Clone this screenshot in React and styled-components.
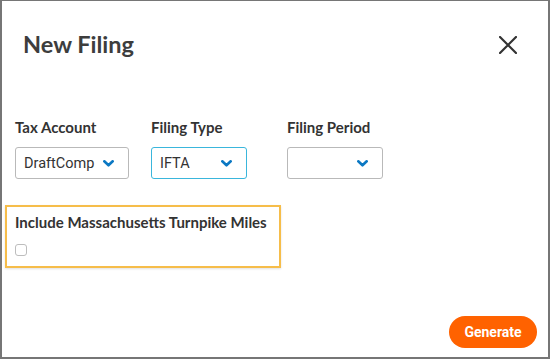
import styled, { createGlobalStyle } from "styled-components";

const GlobalStyle = createGlobalStyle`
  html, body { margin: 0; padding: 0; background: #fff; }
  body { font-family: Lato, "Open Sans", sans-serif; }
  * { box-sizing: border-box; }
`

function Chevron() {
    return (
        <svg width="11" height="7" viewBox="0 0 11 7">
            <path d="M1.3 1.3 L5.5 5.3 L9.7 1.3" fill="none" stroke="#0b78c3" strokeWidth="2.6" strokeLinecap="round" strokeLinejoin="round" />
        </svg>
    )
}

function Field({ label, value, width, focused }) {
    return (
        <Campo>
            <Rotulo>{label}</Rotulo>
            <Seletor width={width} focused={focused}>
                <Valor>{value}</Valor>
                <Chevron />
            </Seletor>
        </Campo>
    )
}

export default function App() {
    return (
        <>
            <GlobalStyle />
            <Modal>
                <Cabecalho>
                    <Titulo>New Filing</Titulo>
                    <Fechar aria-label="close">
                        <svg width="18" height="18" viewBox="0 0 18 18">
                            <path d="M1 1 L17 17 M17 1 L1 17" stroke="#333" strokeWidth="2.2" strokeLinecap="round" />
                        </svg>
                    </Fechar>
                </Cabecalho>
                <Campos>
                    <Field label="Tax Account" value="DraftComp" width={114} />
                    <Field label="Filing Type" value="IFTA" width={96} focused />
                    <Field label="Filing Period" value="" width={96} />
                </Campos>
                <Painel>
                    <Rotulo>Include Massachusetts Turnpike Miles</Rotulo>
                    <Caixa />
                </Painel>
                <Rodape>
                    <Gerar>Generate</Gerar>
                </Rodape>
            </Modal>
        </>
    )
}

const Modal = styled.div`
width: 550px;
height: 359px;
background: #fff;
border: 2px solid #767676;
border-top-width: 1px;
display: flex;
flex-direction: column;
`
const Cabecalho = styled.div`
display: flex;
align-items: center;
justify-content: space-between;
padding: 29px 31px 0 21px;
`
const Titulo = styled.div`
font-family: Lato, sans-serif;
font-weight: 700;
font-size: 23.5px;
line-height: 29px;
color: #3d3d3d;
`
const Fechar = styled.div`
width: 18px;
height: 18px;
display: flex;
`
const Campos = styled.div`
display: grid;
grid-template-columns: 136px 136px auto;
margin-top: 60px;
padding-left: 13px;
`
const Campo = styled.div`
display: flex;
flex-direction: column;
`
const Rotulo = styled.div`
font-family: Lato, sans-serif;
font-weight: 700;
font-size: 15px;
line-height: 17px;
color: #333;
`
const Seletor = styled.div`
margin-top: 11px;
width: ${props => props.width}px;
height: 32px;
border: ${props => props.focused ? "1.5px solid #3ab6dc" : "1px solid #b9b9b9"};
border-radius: 3px;
display: flex;
align-items: center;
justify-content: space-between;
padding: 0 14px 0 8px;
`
const Valor = styled.span`
font-family: Roboto, sans-serif;
font-size: 14.5px;
color: #333;
`
const Painel = styled.div`
margin: 26px 0 0 3px;
width: 276px;
height: 63px;
border: 2px solid #f6bd4a;
box-shadow: 0 1px 2px rgba(0, 0, 0, 0.12);
padding: 7px 0 0 8px;
`
const Caixa = styled.div`
margin-top: 13px;
width: 12px;
height: 12px;
border: 1px solid #bdbdbd;
border-radius: 3px;
`
const Rodape = styled.div`
margin-top: auto;
display: flex;
justify-content: flex-end;
padding: 0 11px 9px 0;
`
const Gerar = styled.button`
width: 88px;
height: 32px;
border: none;
border-radius: 16px;
background: #ff6200;
color: #fff;
font-family: Roboto, sans-serif;
font-weight: 700;
font-size: 14px;
padding: 0;
`
